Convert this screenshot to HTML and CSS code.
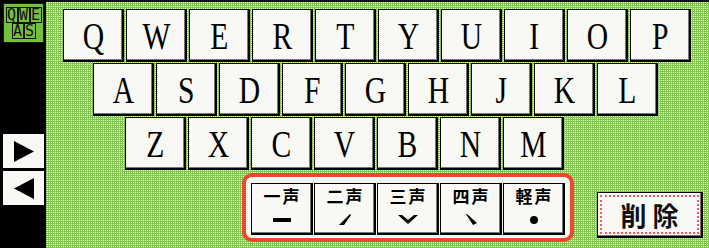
FILE: index.html
```html
<!DOCTYPE html>
<html>
<head>
<meta charset="utf-8">
<link rel="stylesheet" href="styles.css">
</head>
<body>
<div class="screen">
  <aside class="side">
    <div class="mode">
      <div class="mrow"><span class="mc">Q</span><span class="mc">W</span><span class="mc">E</span></div>
      <div class="mrow"><span class="mc">A</span><span class="mc">S</span></div>
    </div>
    <div class="arrow first">
      <svg width="20" height="21" viewBox="0 0 20 21"><polygon points="0,0 20,10.5 0,21" fill="#000"/></svg>
    </div>
    <div class="arrow">
      <svg width="20" height="21" viewBox="0 0 20 21"><polygon points="20,0 0,10.5 20,21" fill="#000"/></svg>
    </div>
  </aside>
  <main class="board">
    <div class="row">
      <div class="key"><span>Q</span></div><div class="key"><span>W</span></div><div class="key"><span>E</span></div><div class="key"><span>R</span></div><div class="key"><span>T</span></div><div class="key"><span>Y</span></div><div class="key"><span>U</span></div><div class="key"><span>I</span></div><div class="key"><span>O</span></div><div class="key"><span>P</span></div>
    </div>
    <div class="row row2">
      <div class="key"><span>A</span></div><div class="key"><span>S</span></div><div class="key"><span>D</span></div><div class="key"><span>F</span></div><div class="key"><span>G</span></div><div class="key"><span>H</span></div><div class="key"><span>J</span></div><div class="key"><span>K</span></div><div class="key"><span>L</span></div>
    </div>
    <div class="row row3">
      <div class="key"><span>Z</span></div><div class="key"><span>X</span></div><div class="key"><span>C</span></div><div class="key"><span>V</span></div><div class="key"><span>B</span></div><div class="key"><span>N</span></div><div class="key"><span>M</span></div>
    </div>
    <div class="bottom">
      <div class="tones">
        <div class="tkey"><span class="tl">一声</span>
          <svg width="22" height="11" viewBox="0 0 22 11"><rect x="2" y="4" width="18" height="4" fill="#000"/></svg></div>
        <div class="tkey"><span class="tl">二声</span>
          <svg width="22" height="11" viewBox="0 0 22 11"><polygon points="5,11 10,11 17,1 16,0" fill="#000"/></svg></div>
        <div class="tkey"><span class="tl">三声</span>
          <svg width="22" height="11" viewBox="0 0 22 11"><polygon points="1,1 5,1 11,6 17,1 21,1 11,10" fill="#000"/></svg></div>
        <div class="tkey"><span class="tl">四声</span>
          <svg width="22" height="11" viewBox="0 0 22 11"><polygon points="6,0 7,0 17,9 13,11" fill="#000"/></svg></div>
        <div class="tkey"><span class="tl">軽声</span>
          <svg width="22" height="11" viewBox="0 0 22 11"><circle cx="11" cy="6" r="4" fill="#000"/></svg></div>
      </div>
      <div class="del"><span class="delin">削除</span></div>
    </div>
  </main>
</div>
</body>
</html>
```

FILE: styles.css
```css
html, body {
  margin: 0;
  padding: 0;
  width: 709px;
  height: 248px;
  overflow: hidden;
  background: #000;
}
.screen {
  display: flex;
  width: 709px;
  height: 248px;
}
.side {
  width: 46px;
  flex: none;
  background: #000;
  display: flex;
  flex-direction: column;
  align-items: flex-start;
  padding: 3px 0 0 3px;
  box-sizing: border-box;
}
.mode {
  width: 41px;
  height: 40px;
  box-sizing: border-box;
  background: #74c03e;
  border: 1px solid #1a1a1a;
  display: flex;
  flex-direction: column;
  align-items: center;
  padding-top: 3px;
}
.mrow {
  display: flex;
}
.mc {
  width: 12px;
  height: 16px;
  box-sizing: border-box;
  border: 1px solid #111;
  font-family: "DejaVu Sans Mono", monospace;
  font-size: 15px;
  line-height: 14px;
  text-align: center;
  color: #111;
}
.arrow {
  width: 41px;
  height: 34px;
  background: #f8f9f4;
  display: flex;
  align-items: center;
  justify-content: center;
  margin-top: 3px;
}
.arrow.first {
  margin-top: 91px;
}
.board {
  flex: 1;
  border-top: 2px solid #111;
  background-color: #84c654;
  background-image: conic-gradient(from 90deg at 1px 1px, #84c654 75%, #f0f9e8 0);
  background-size: 2px 2px;
  padding: 7px 0 0 17px;
  display: flex;
  flex-direction: column;
  gap: 1px;
}
.row {
  display: flex;
  gap: 2px;
}
.row2 { margin-left: 30px; }
.row3 { margin-left: 62px; }
.key, .tkey, .del {
  background: #f8f9f4;
  border: 1px solid #000;
  border-right-width: 2px;
  border-bottom-width: 2px;
  box-shadow: inset -1px -1px 0 #777;
  box-sizing: border-box;
}
.key {
  width: 61px;
  height: 53px;
  display: flex;
  align-items: center;
  justify-content: center;
}
.key span {
  display: inline-block;
  font-family: "Liberation Serif", serif;
  font-size: 37px;
  line-height: 1;
  color: #000;
  transform: scaleX(0.8);
  margin-top: 2px;
}
.bottom {
  display: flex;
  margin: 2px 0 0 179px;
  align-items: flex-start;
}
.tones {
  display: flex;
  gap: 1px;
  border: 4px solid #f2472e;
  border-radius: 10px;
  padding: 6px 5px 3px 5px;
  background: #f8f9f4;
}
.tkey {
  width: 62px;
  height: 52px;
  display: flex;
  flex-direction: column;
  align-items: center;
  padding-top: 2px;
}
.tl {
  font-family: "Noto Sans CJK JP", "Noto Sans CJK SC", sans-serif;
  font-weight: 700;
  font-size: 17px;
  line-height: 20px;
  color: #000;
  letter-spacing: 2px;
  margin-right: -2px;
}
.tkey svg {
  margin-top: 8px;
}
.del {
  margin: 19px 0 0 23px;
  width: 106px;
  height: 46px;
  padding: 2px;
  display: flex;
}
.delin {
  flex: 1;
  border: 2px dotted #ee5a6a;
  display: flex;
  align-items: center;
  justify-content: center;
  font-family: "Noto Sans CJK JP", sans-serif;
  font-weight: 700;
  font-size: 26px;
  letter-spacing: 6px;
  padding-left: 6px;
  color: #111;
}
```
